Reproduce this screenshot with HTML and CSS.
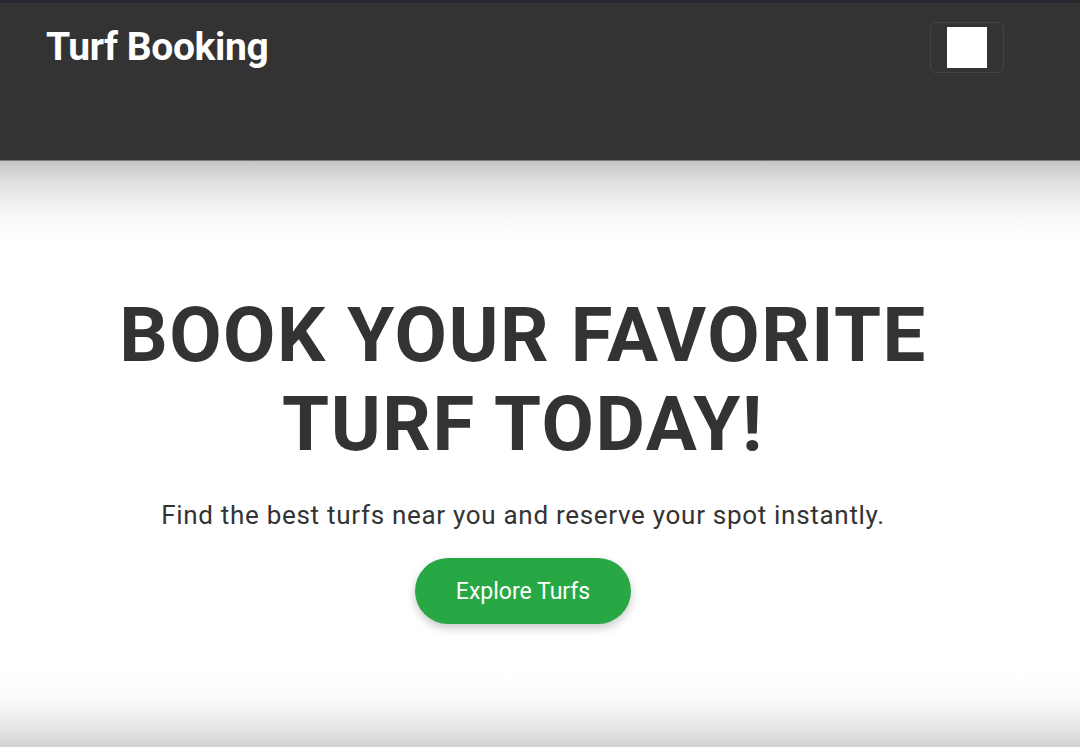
FILE: index.html
```html
<!DOCTYPE html>
<html lang="en">
<head>
<meta charset="utf-8">
<title>Turf Booking</title>
<link rel="stylesheet" href="styles.css">
</head>
<body>
<header class="navbar">
  <div class="brand">Turf Booking</div>
  <button class="toggler" aria-label="Menu"><span class="toggler-icon"></span></button>
</header>
<main class="hero">
  <h1 class="hero-title">BOOK YOUR FAVORITE<br>TURF TODAY!</h1>
  <p class="hero-text">Find the best turfs near you and reserve your spot instantly.</p>
  <a class="hero-btn" href="#">Explore Turfs</a>
</main>
</body>
</html>
```
FILE: styles.css
```css
* { box-sizing: border-box; }
html, body { height: 100%; }
body {
  margin: 0;
  font-family: Roboto, "Liberation Sans", Arial, sans-serif;
  display: flex;
  flex-direction: column;
  min-height: 100vh;
  background: #fff;
}
.navbar {
  height: 161px;
  background: #333333;
  border-top: 3px solid #262a30;
  border-bottom: 1px solid #7a7a7a;
  display: flex;
  align-items: flex-start;
  justify-content: space-between;
  padding: 19px 76px 0 46px;
  flex: none;
}
.brand {
  color: #fff;
  font-weight: 700;
  font-size: 39px;
  line-height: 47px;
  letter-spacing: -0.4px;
  margin-top: 2px;
}
.toggler {
  width: 74px;
  height: 51px;
  background: transparent;
  border: 1px solid #444;
  border-radius: 6px;
  padding: 0;
  display: flex;
  align-items: center;
  justify-content: center;
}
.toggler-icon {
  display: block;
  width: 40px;
  height: 41px;
  background: #fff;
}
.hero {
  flex: 1;
  display: flex;
  flex-direction: column;
  align-items: center;
  padding: 130px 34px 0 0;
  background: linear-gradient(to bottom,
    #c5c5c5 0px, #dcdcdc 18px, #ececec 36px, #f7f7f7 54px, #fdfdfd 70px, #fff 85px,
    #fff calc(100% - 75px), #fcfcfc calc(100% - 55px), #f5f5f5 calc(100% - 38px),
    #e8e8e8 calc(100% - 22px), #dadada calc(100% - 8px), #d2d2d2 100%);
  color: #333;
  text-align: center;
}
.hero-title {
  margin: 0;
  font-size: 76px;
  line-height: 89px;
  font-weight: 700;
  letter-spacing: 1.5px;
  color: #333;
}
.hero-text {
  margin: 31px 0 0;
  font-size: 26px;
  line-height: 30px;
  letter-spacing: 0.7px;
  color: #333;
}
.hero-btn {
  margin-top: 28px;
  display: inline-flex;
  align-items: center;
  justify-content: center;
  height: 66px;
  width: 216px;
  border-radius: 33px;
  background: #28a745;
  color: #fff;
  font-size: 23px;
  text-decoration: none;
  box-shadow: 0 4px 10px rgba(0,0,0,0.22);
}
```
